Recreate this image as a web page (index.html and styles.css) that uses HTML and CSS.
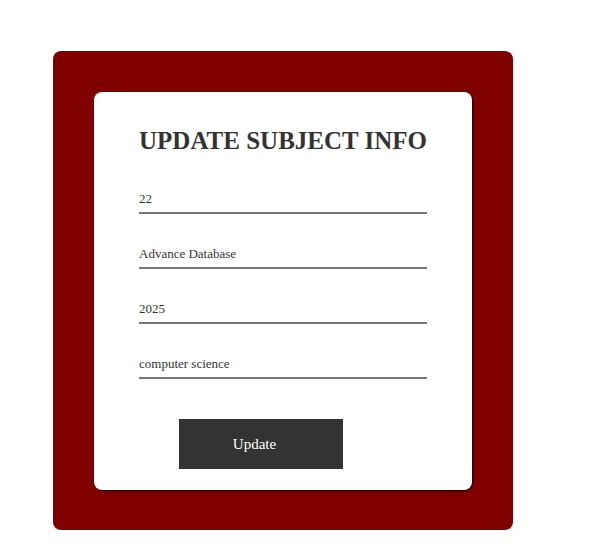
FILE: index.html
```html
<!DOCTYPE html>
<html>
<head>
<meta charset="utf-8">
<title>Update Subject Info</title>
<link rel="stylesheet" href="styles.css">
</head>
<body>
  <div class="frame">
    <div class="card">
      <h2 class="title">UPDATE SUBJECT INFO</h2>
      <form class="form">
        <input class="field" type="text" value="22">
        <input class="field" type="text" value="Advance Database">
        <input class="field" type="text" value="2025">
        <input class="field" type="text" value="computer science">
        <button class="btn" type="button">Update</button>
      </form>
    </div>
  </div>
</body>
</html>
```
FILE: styles.css
```css
html, body {
  margin: 0;
  padding: 0;
  background: #ffffff;
  font-family: "Liberation Serif", "Times New Roman", serif;
}
.frame {
  width: 460px;
  box-sizing: border-box;
  margin: 51px 0 0 53px;
  padding: 41px 41px 40px 41px;
  background: #800000;
  border-radius: 8px;
}
.card {
  width: 378px;
  box-sizing: border-box;
  padding: 35px 45px 21px 45px;
  background: #ffffff;
  border-radius: 8px;
  box-shadow: 1px 1px 2px rgba(0, 0, 0, 0.85);
}
.title {
  margin: 0;
  font-size: 25px;
  line-height: 28px;
  font-weight: bold;
  color: #333333;
  white-space: nowrap;
}
.form {
  display: flex;
  flex-direction: column;
  align-items: flex-start;
  gap: 26px;
  margin-top: 30px;
}
.field {
  display: block;
  width: 288px;
  height: 27px;
  box-sizing: content-box;
  margin: 0;
  padding: 0;
  border: none;
  border-bottom: 2px solid #777777;
  outline: none;
  background: transparent;
  font-family: "Liberation Serif", "Times New Roman", serif;
  font-size: 13px;
  color: #333333;
}
.btn {
  width: 164px;
  height: 50px;
  margin: 14px 0 0 40px;
  padding: 0 13px 0 0;
  border: none;
  background: #333333;
  color: #ffffff;
  font-family: "Liberation Serif", "Times New Roman", serif;
  font-size: 15px;
  font-weight: normal;
  text-align: center;
  cursor: pointer;
}
```
